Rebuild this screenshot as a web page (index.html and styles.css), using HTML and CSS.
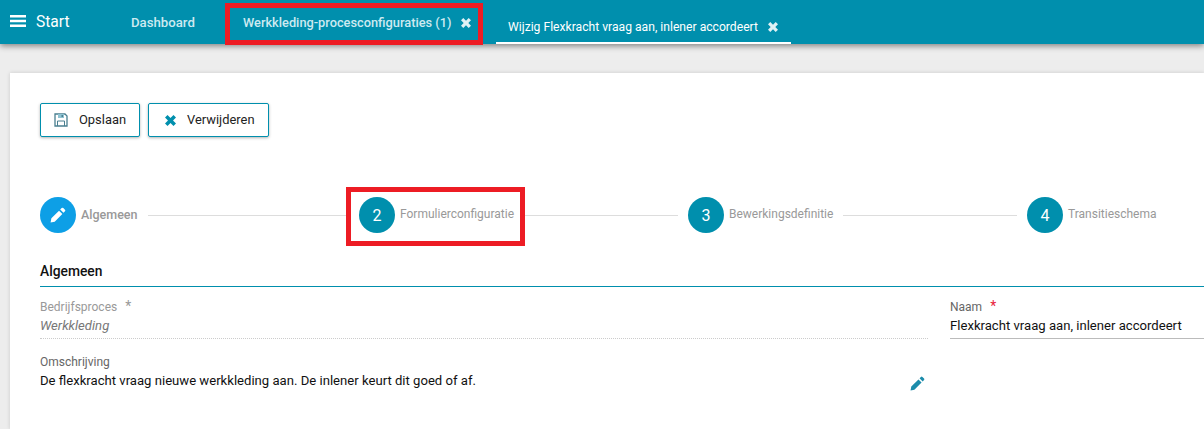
FILE: index.html
```html
<!DOCTYPE html>
<html lang="nl">
<head>
    <meta charset="UTF-8">
    <title>Wijzig Flexkracht vraag aan, inlener accordeert</title>
    <link rel="stylesheet" href="styles.css">
</head>
<body>
    <header class="topbar">
        <div class="start">
            <svg class="menu-icon" viewBox="0 0 16 14"><path d="M0 1h16v2.600H0zM0 5.700h16v2.600H0zM0 10.400h16V13H0z"/></svg>
            <span class="start-label">Start</span>
        </div>
        <a class="tab tab-dashboard">Dashboard</a>
        <a class="tab tab-process">Werkkleding-procesconfiguraties (1)
            <svg class="close-icon" viewBox="0 0 10 10"><path d="M2.300 0 5 2.700 7.700 0 10 2.300 7.300 5 10 7.700 7.700 10 5 7.300 2.300 10 0 7.700 2.700 5 0 2.300z"/></svg>
        </a>
        <a class="tab tab-active">Wijzig Flexkracht vraag aan, inlener accordeert
            <svg class="close-icon" viewBox="0 0 10 10"><path d="M2.300 0 5 2.700 7.700 0 10 2.300 7.300 5 10 7.700 7.700 10 5 7.300 2.300 10 0 7.700 2.700 5 0 2.300z"/></svg>
        </a>
    </header>

    <main class="card">
        <div class="actions">
            <button class="btn">
                <svg class="btn-icon" viewBox="0 0 14 14"><path fill="none" stroke="#4a7f90" stroke-width="1.3" d="M1 1h10l2 2v10H1z"/><path fill="#8fc3d2" d="M4 1h6v4H4z"/><path fill="#4a7f90" d="M7.500 2H9v2H7.500z"/><path fill="none" stroke="#4a7f90" d="M3.500 13V8h7v5"/></svg>
                Opslaan
            </button>
            <button class="btn">
                <svg class="btn-icon btn-icon-x" viewBox="0 0 10 10"><path d="M2.300 0 5 2.700 7.700 0 10 2.300 7.300 5 10 7.700 7.700 10 5 7.300 2.300 10 0 7.700 2.700 5 0 2.300z"/></svg>
                Verwijderen
            </button>
        </div>

        <div class="stepper">
            <div class="step step-first">
                <span class="circle circle-edit">
                    <svg class="pencil" viewBox="0 0 14 14"><path d="M10.200.9a1 1 0 0 1 1.400 0l1.500 1.500a1 1 0 0 1 0 1.400l-1.300 1.300-2.900-2.900zM7.900 3.200l2.900 2.900-6.700 6.700L.5 13.500l.7-3.600z"/></svg>
                </span>
                <span class="step-label step-label-current">Algemeen</span>
            </div>
            <div class="step step-second">
                <span class="circle">2</span>
                <span class="step-label">Formulierconfiguratie</span>
            </div>
            <div class="step step-third">
                <span class="circle">3</span>
                <span class="step-label">Bewerkingsdefinitie</span>
            </div>
            <div class="step step-last">
                <span class="circle">4</span>
                <span class="step-label">Transitieschema</span>
            </div>
        </div>

        <h2 class="section-title">Algemeen</h2>

        <div class="form-grid">
            <div class="col-left">
                <div class="field-readonly">
                    <div class="label label-top">Bedrijfsproces <span class="req">*</span></div>
                    <div class="value">Werkkleding</div>
                </div>
                <div class="field-text">
                    <div class="label">Omschrijving</div>
                    <div class="text-row">
                        <span>De flexkracht vraag nieuwe werkkleding aan. De inlener keurt dit goed of af.</span>
                        <svg class="edit-icon" viewBox="0 0 14 14"><path d="M10.200.9a1 1 0 0 1 1.400 0l1.500 1.500a1 1 0 0 1 0 1.400l-1.300 1.300-2.900-2.900zM7.900 3.200l2.900 2.900-6.700 6.700L.5 13.500l.7-3.600z"/></svg>
                    </div>
                </div>
            </div>
            <div class="col-right">
                <div class="field-name">
                    <div class="label label-top">Naam <span class="req req-red">*</span></div>
                    <div class="value-name">Flexkracht vraag aan, inlener accordeert</div>
                </div>
            </div>
        </div>
    </main>

    <div class="mark mark-tab"></div>
    <div class="mark mark-step"></div>
</body>
</html>
```

FILE: styles.css
```css
html, body {
    margin: 0;
    height: 429px;
    overflow: hidden;
}
body {
    font-family: Roboto, "Liberation Sans", sans-serif;
    font-size: 13.12px;
    background-color: #ededed;
    color: #111;
    position: relative;
}
.topbar {
    height: 44px;
    background-color: #008fad;
    box-shadow: 0 2px 6px rgba(0, 0, 0, 0.45);
    display: flex;
    color: #fff;
    padding-left: 10px;
}
.start {
    display: flex;
    align-items: center;
    gap: 10px;
    font-size: 15.6px;
    height: 42px;
    width: 121px;
}
.start-label {
    padding-top: 1px;
}
.menu-icon {
    width: 16px;
    height: 14px;
    fill: #fff;
}
.tab {
    display: flex;
    align-items: center;
    font-weight: 500;
    color: #cdeaf1;
    height: 44px;
    padding-top: 1px;
    box-sizing: border-box;
}
.tab-dashboard {
    width: 112px;
    font-size: 13.2px;
}
.tab-process {
    width: 253px;
    font-size: 12.8px;
}
.tab-active {
    font-size: 12.15px;
    font-weight: 400;
    color: #fff;
    border-bottom: 2px solid #fff;
    padding: 12px 12px 0;
    width: 295px;
}
.close-icon {
    width: 10px;
    height: 10px;
    fill: #dff1f5;
    margin-left: 10px;
}
.card {
    background-color: #fff;
    margin: 29px 0 0 10px;
    height: 356px;
    box-sizing: border-box;
    padding: 30px 0 0 30px;
    box-shadow: 0 0 4px rgba(0, 0, 0, 0.15);
}
.actions {
    display: flex;
    gap: 8px;
}
.btn {
    height: 34px;
    border: 1px solid #008fad;
    border-radius: 2px;
    background: #fff;
    box-shadow: 0 1px 3px rgba(0, 0, 0, 0.3);
    font-family: inherit;
    font-size: 12.9px;
    color: #222;
    display: flex;
    align-items: center;
    padding: 0 13px 2px 13px;
    gap: 11px;
}
.btn-icon {
    width: 14px;
    height: 14px;
    margin-top: 2px;
}
.btn-icon-x {
    width: 11px;
    height: 11px;
    fill: #008fad;
    margin-left: 3px;
}
.stepper {
    display: flex;
    margin-top: 60px;
}
.step {
    display: flex;
    align-items: center;
    gap: 5px;
    height: 36px;
    color: #999;
    font-size: 12px;
}
.step::after {
    content: "";
    flex: 1;
    height: 1px;
    background-color: #ddd;
    margin: 1px 10px 0 5px;
}
.step-first {
    flex: 0 0 319px;
}
.step-second {
    flex: 0 0 329px;
}
.step-third {
    flex: 0 0 339px;
}
.step-last {
    flex: 1;
}
.step-last::after {
    display: none;
}
.step-label {
    padding-bottom: 2px;
}
.step-label-current {
    font-size: 12.5px;
    font-weight: 500;
}
.circle {
    width: 36px;
    height: 36px;
    border-radius: 50%;
    background-color: #008fad;
    color: #fff;
    font-size: 16px;
    display: flex;
    align-items: center;
    justify-content: center;
    flex: none;
}
.circle-edit {
    background-color: #0d9fe6;
}
.pencil {
    width: 16px;
    height: 16px;
    fill: #fff;
}
.section-title {
    margin: 30px 0 0;
    font-size: 13.8px;
    font-weight: 500;
    color: #111;
    padding-bottom: 7px;
    border-bottom: 1px solid #008fad;
    line-height: 16px;
}
.form-grid {
    display: grid;
    grid-template-columns: 888px 1fr;
    column-gap: 22px;
    margin-top: 12px;
}
.label {
    font-size: 12px;
    line-height: 16px;
    color: #666;
}
.label-top {
    padding-bottom: 1px;
}
.req {
    margin-left: 5px;
    font-size: 14px;
    line-height: 14px;
}
.req-red {
    color: #e8213a;
}
.field-readonly {
    border-bottom: 1px dotted #ccc;
    padding-bottom: 2px;
}
.field-readonly .label {
    color: #999;
}
.value {
    font-style: italic;
    color: #777;
    line-height: 20px;
}
.field-text {
    margin-top: 15px;
}
.text-row {
    display: flex;
    justify-content: space-between;
    align-items: flex-start;
    line-height: 20px;
    margin-top: 1px;
}
.edit-icon {
    width: 15px;
    height: 15px;
    fill: #1c8cab;
    margin: 5px 3px 0 0;
}
.field-name {
    border-bottom: 1px solid #bbb;
    padding-bottom: 2px;
}
.value-name {
    line-height: 20px;
}
.mark {
    position: absolute;
    box-sizing: border-box;
    border: 5px solid #ed1c24;
}
.mark-tab {
    left: 225px;
    top: 3px;
    width: 258px;
    height: 42px;
}
.mark-step {
    left: 346px;
    top: 187px;
    width: 179px;
    height: 59px;
}
```
